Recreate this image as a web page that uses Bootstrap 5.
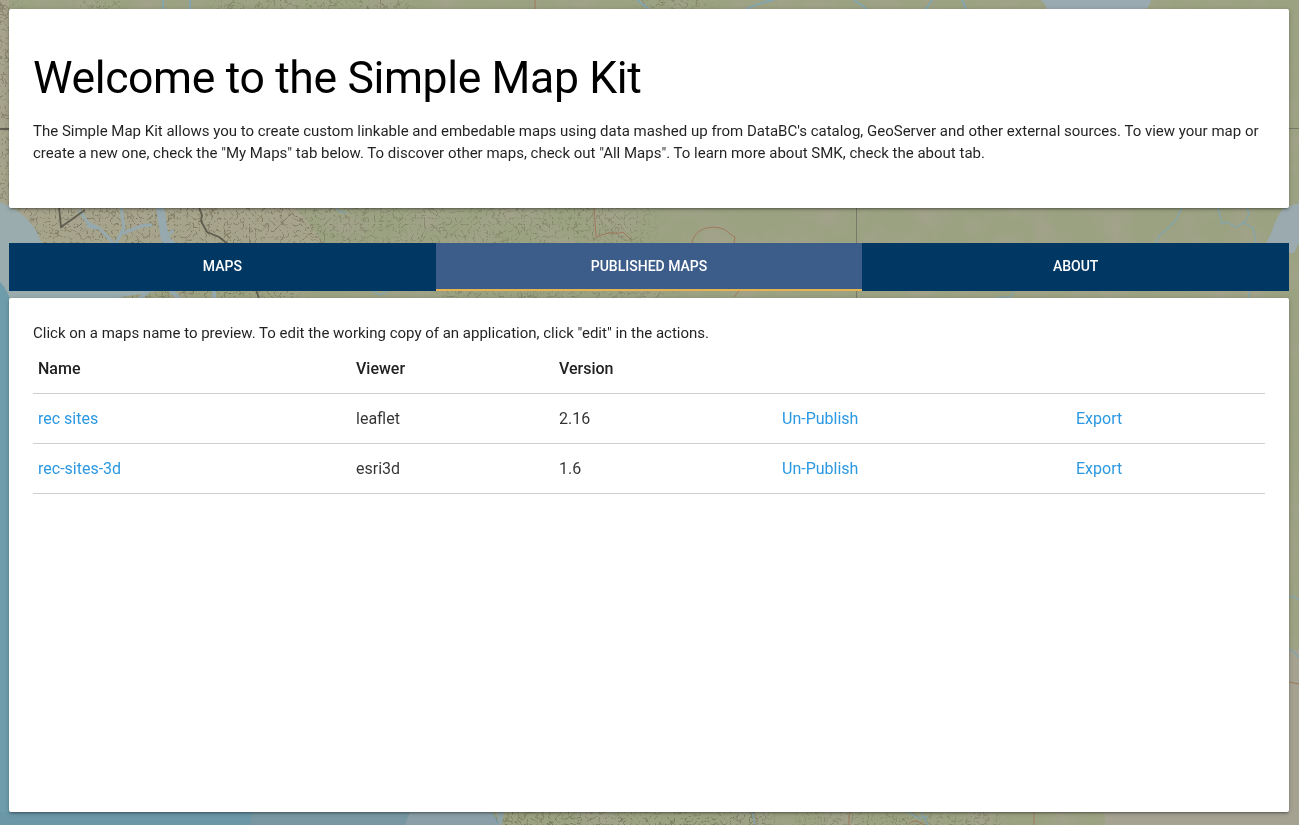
<!DOCTYPE html>
<html lang="en">
<head>
<meta charset="utf-8">
<meta name="viewport" content="width=device-width, initial-scale=1">
<title>Simple Map Kit</title>
<link href="https://cdn.jsdelivr.net/npm/bootstrap@5.3.0/dist/css/bootstrap.min.css" rel="stylesheet">
<style>
body{font-family:Roboto,sans-serif;font-size:15px;line-height:22px;color:rgba(0,0,0,.87);background:#9da285;height:825px;overflow:hidden}
.map-bg{position:fixed;inset:0;z-index:-1}
.page{padding:9px 10px 0 9px}
.panel{border:0;border-radius:2px;box-shadow:0 2px 2px 0 rgba(0,0,0,.14),0 3px 1px -2px rgba(0,0,0,.12),0 1px 5px 0 rgba(0,0,0,.2)}
.intro{height:199px;padding:0 24px}
.intro h1{font-size:44.5px;letter-spacing:-.36px;line-height:54px;font-weight:400;color:#000;margin:42px 0 15px}
.tabs-bar{height:48px;margin-top:35px;background:#003763}
.tabs-bar .nav-link{height:48px;line-height:47px;padding:0;border-radius:0;color:#fff;font-size:14px;font-weight:500;text-transform:uppercase}
.tabs-bar .nav-link.active{background:#3c5c89;border-bottom:2px solid #e6b354}
.listing{height:514px;margin-top:7px;padding:24px 24px 0}
.map-table{font-size:16px;line-height:24px;table-layout:fixed;--bs-table-color:rgba(0,0,0,.8)}
.map-table>:not(caption)>*>*{height:50px;padding:1px 5px 0;vertical-align:middle;border-bottom:1px solid #cfcfcf}
.map-table>thead>tr>th{height:49px;font-weight:500;color:#212121}
.map-table a{color:#2b98e2;text-decoration:none}
</style>
</head>
<body>
<svg class="map-bg" width="1299" height="825" viewBox="0 0 1299 825" aria-hidden="true">
  <defs>
    <filter id="relief" x="0" y="0" width="100%" height="100%" color-interpolation-filters="sRGB">
      <feTurbulence type="turbulence" baseFrequency=".16" numOctaves="2" seed="8"/>
      <feColorMatrix values="0 0 0 0 .37  0 0 0 0 .35  0 0 0 0 .26  -7 0 0 0 1.1"/>
    </filter>
    <filter id="grain" x="0" y="0" width="100%" height="100%" color-interpolation-filters="sRGB">
      <feTurbulence type="fractalNoise" baseFrequency=".03" numOctaves="5" seed="3"/>
      <feColorMatrix values="0 0 0 0 .66  0 0 0 0 .64  0 0 0 0 .57  3 0 0 0 -1.3"/>
    </filter>
    <filter id="soft"><feGaussianBlur stdDeviation="9"/></filter>
    <mask id="hills">
      <g fill="#fff" filter="url(#soft)">
        <path d="M-20 -20H14V210H-20ZM20 190H305L330 260H20Z"/>
        <path d="M95 275H300V310H95ZM490 800H770V845H490Z"/>
        <path d="M80 -20H120V19H80ZM215 -20H410V19H215ZM640 -20H705V19H640Z" opacity=".8"/>
        <path d="M300 195H650V253H300ZM440 278H670V310H440ZM800 802H1000V845H800Z" opacity=".7"/>
      </g>
    </mask>
  </defs>
  <rect width="1299" height="825" fill="#9ba282"/>
  <path d="M20 200H290L330 250H20ZM0 0H9V210H0Z" fill="#a6a48b"/>
  <rect width="1299" height="825" filter="url(#grain)" opacity=".5"/>
  <path d="M1286 650H1299V825H1105V812H1286Z" fill="#a5a292"/>
  <rect width="1299" height="825" filter="url(#relief)" mask="url(#hills)" opacity=".6"/>
  <!-- ocean and inlets -->
  <path d="M0 202C14 208 25 215 31 224C39 231 37 239 46 248L170 289L104 300L10 304V825H0Z" fill="#9aacae"/>
  <path d="M0 282C4 286 8 292 10 300V825H0Z" fill="#6f9cab"/>
  <path d="M0 812H492L500 825H0Z" fill="#6b97a7"/>
  <path d="M252 812H490L498 825H250Z" fill="#7897a3"/>
  <path d="M410 812H492L498 825H405Z" fill="#8a9fa7"/>
  <path d="M497 812h7l-2 13h-4z" fill="#8fa2a5"/>
  <g fill="none" stroke="#96a9ae" stroke-linecap="round">
    <path d="M160 207l5 32 10 8" stroke-width="8"/>
    <path d="M80 211l8 12 12 6 14 15M121 208l3 20-8 15M88 226l7 2M124 233l17-7 10-1" stroke-width="3"/>
    <path d="M165 239l7-8" stroke-width="3"/>
    <path d="M150 290l-10 8M170 290l8 7M214 290v9" stroke-width="4"/>
  </g>
  <path d="M1284 208L1299 203V243H1266C1273 232 1275 217 1284 208ZM1289 243H1299L1294 253H1289Z" fill="#9aaaaf"/>
  <path d="M1040 0h111q-2 9-7 9h-98q1-5-6-9z" fill="#99aab0"/>
  <!-- rivers -->
  <g fill="none" stroke="#84a5ab" stroke-width="1.3">
    <path d="M163 0v9M190 0v9M637 0l12 9M774 0q-13 2-28 9M854 0l13 9M932 0l-6 9M962 0l4 9" stroke-width="2"/>
    <path d="M1182 207l-6 13-12 12-5 4-3 7M1218 208l4 16 4-2 10 5 9-5 4-8-2-6M1242 222l11 6 3 15M1249 290v8M1014 292l-4 5-15 1"/>
    <path d="M1289 597q5-2 10 3M1289 649l5 3 5 6M752 812l3 13M921 812l7 13M908 812l10 6 10-1"/>
    <path d="M335 207l5 5 6 1M370 290l10 5 10-5"/>
  </g>
  <!-- borders and roads -->
  <g fill="none">
    <path d="M59 207l2 20 24-17M199 207l3 8-1 6 6 11 12 5 10 8M256 290l3 8M0 129h9" stroke="#605e50" stroke-width="1.8"/>
    <path d="M856.500 208v35M856.500 291v7M1289 128.500h10" stroke="#777969"/>
    <path d="M594 208l2 29 15-5 5 2 7-2 7 7M692 243c2-18 30-20 38-9l5 3-1 6M734 297l5-6M849 825v-10q1-4 8-4M1034 812v13M908 825q5-8 16 0M1289 682l10 2M535 0v9" stroke="#a1785e" stroke-width="1"/>
  </g>
</svg>

<main class="page">
  <header class="card panel intro">
    <h1>Welcome to the Simple Map Kit</h1>
    <p class="mb-0">The Simple Map Kit allows you to create custom linkable and embedable maps using data mashed up from DataBC's catalog, GeoServer and other external sources. To view your map or create a new one, check the "My Maps" tab below. To discover other maps, check out "All Maps". To learn more about SMK, check the about tab.</p>
  </header>
  <nav class="nav nav-justified tabs-bar">
    <a class="nav-link" href="#">Maps</a>
    <a class="nav-link active" href="#">Published Maps</a>
    <a class="nav-link" href="#">About</a>
  </nav>
  <section class="card panel listing">
    <p class="mb-0">Click on a maps name to preview. To edit the working copy of an application, click "edit" in the actions.</p>
    <table class="table map-table mb-0">
      <colgroup><col style="width:318px"><col style="width:203px"><col style="width:223px"><col style="width:294px"><col></colgroup>
      <thead><tr><th>Name</th><th>Viewer</th><th>Version</th><th></th><th></th></tr></thead>
      <tbody>
        <tr><td><a href="#">rec sites</a></td><td>leaflet</td><td>2.16</td><td><a href="#">Un-Publish</a></td><td><a href="#">Export</a></td></tr>
        <tr><td><a href="#">rec-sites-3d</a></td><td>esri3d</td><td>1.6</td><td><a href="#">Un-Publish</a></td><td><a href="#">Export</a></td></tr>
      </tbody>
    </table>
  </section>
</main>
<script src="https://cdn.jsdelivr.net/npm/bootstrap@5.3.0/dist/js/bootstrap.bundle.min.js"></script>
</body>
</html>
